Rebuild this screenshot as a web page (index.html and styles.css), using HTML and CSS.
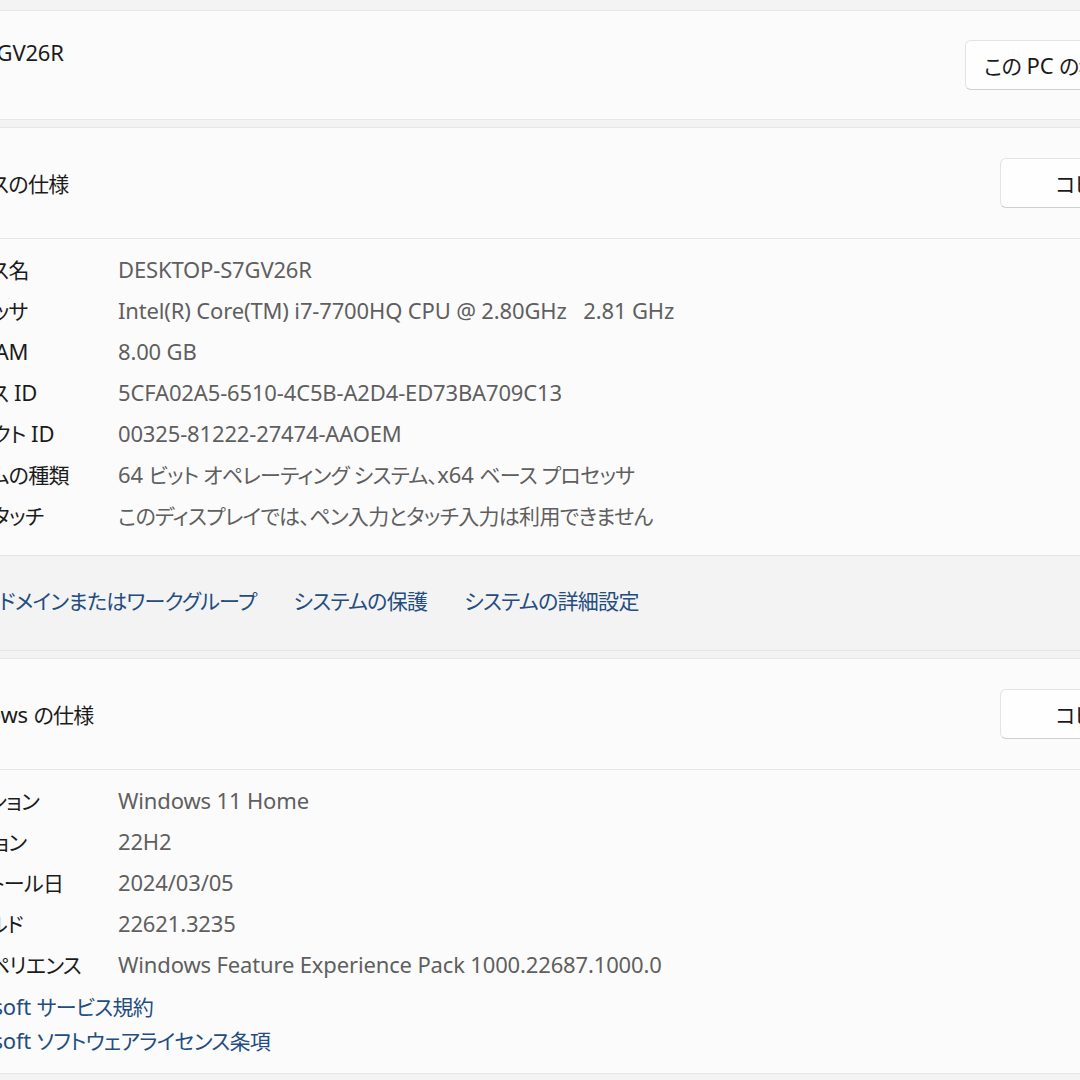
FILE: index.html
```html
<!DOCTYPE html>
<html lang="ja">
<head>
<meta charset="utf-8">
<title>バージョン情報</title>
<link rel="stylesheet" href="styles.css">
</head>
<body>
<div class="page">
  <section class="card card-top">
    <div class="device-name">DESKTOP-S7GV26R</div>
    <button class="btn btn-rename"><span class="ja">この</span> PC <span class="ja">の名前を変更</span></button>
  </section>

  <section class="card">
    <div class="card-header">
      <div class="title"><span class="ja">デバイスの仕様</span></div>
      <button class="btn btn-copy"><span class="ja">コピー</span></button>
    </div>
    <div class="details">
      <div class="row"><span class="label"><span class="ja">デバイス名</span></span><span class="value">DESKTOP-S7GV26R</span></div>
      <div class="row"><span class="label"><span class="ja">プロセッサ</span></span><span class="value">Intel(R) Core(TM) i7-7700HQ CPU @ 2.80GHz&nbsp;&nbsp;&nbsp;2.81 GHz</span></div>
      <div class="row"><span class="label"><span class="ja">実装</span> RAM</span><span class="value">8.00 GB</span></div>
      <div class="row"><span class="label"><span class="ja">デバイス</span> ID</span><span class="value">5CFA02A5-6510-4C5B-A2D4-ED73BA709C13</span></div>
      <div class="row"><span class="label"><span class="ja">プロダクト</span> ID</span><span class="value">00325-81222-27474-AAOEM</span></div>
      <div class="row"><span class="label"><span class="ja">システムの種類</span></span><span class="value">64 <span class="ja">ビット オペレーティング システム、</span>x64 <span class="ja">ベース プロセッサ</span></span></div>
      <div class="row"><span class="label"><span class="ja">ペンとタッチ</span></span><span class="value"><span class="ja">このディスプレイでは、ペン入力とタッチ入力は利用できません</span></span></div>
    </div>
    <div class="related">
      <a class="link" href="#"><span class="ja">ドメインまたはワークグループ</span></a>
      <a class="link" href="#"><span class="ja">システムの保護</span></a>
      <a class="link" href="#"><span class="ja">システムの詳細設定</span></a>
    </div>
  </section>

  <section class="card card-last">
    <div class="card-header">
      <div class="title">Windows <span class="ja">の仕様</span></div>
      <button class="btn btn-copy"><span class="ja">コピー</span></button>
    </div>
    <div class="details details-win">
      <div class="row"><span class="label"><span class="ja">エディション</span></span><span class="value">Windows 11 Home</span></div>
      <div class="row"><span class="label"><span class="ja">バージョン</span></span><span class="value">22H2</span></div>
      <div class="row"><span class="label"><span class="ja">インストール日</span></span><span class="value">2024/03/05</span></div>
      <div class="row"><span class="label">OS <span class="ja">ビルド</span></span><span class="value">22621.3235</span></div>
      <div class="row"><span class="label"><span class="ja">エクスペリエンス</span></span><span class="value">Windows Feature Experience Pack 1000.22687.1000.0</span></div>
      <div class="links">
        <a class="link" href="#">Microsoft <span class="ja">サービス規約</span></a>
        <a class="link" href="#">Microsoft <span class="ja">ソフトウェアライセンス条項</span></a>
      </div>
    </div>
  </section>
</div>
</body>
</html>
```

FILE: styles.css
```css
html, body {
  margin: 0;
  padding: 0;
}

body {
  width: 1080px;
  height: 1080px;
  overflow: hidden;
  background: #f3f3f3;
  font-family: "Noto Sans", "Noto Sans CJK JP", sans-serif;
  font-feature-settings: "palt";
  font-size: 22px;
  letter-spacing: -0.15px;
  color: #1b1b1b;
}

.ja {
  font-size: 21px;
  letter-spacing: -0.7px;
  line-height: 1;
}

.page {
  margin-left: -66px;
  width: 1256px;
  padding-top: 10px;
  display: flex;
  flex-direction: column;
  gap: 7px;
}

.card {
  background: #fbfbfb;
  border: 1px solid #e6e6e6;
  border-radius: 6px;
}

.card-top {
  height: 108px;
  display: flex;
  align-items: center;
  justify-content: space-between;
  padding-right: 20px;
}

.device-name {
  align-self: flex-start;
  margin-top: 26px;
  margin-left: -65px;
  line-height: 30px;
  color: #1b1b1b;
}

.btn {
  font: inherit;
  font-feature-settings: "palt";
  letter-spacing: inherit;
  height: 50px;
  background: #fefefe;
  border: 1px solid #e3e3e3;
  border-bottom-color: #cfcfcf;
  border-radius: 6px;
  color: #1b1b1b;
  white-space: nowrap;
  overflow: hidden;
  padding: 0;
  flex: none;
}

.btn-rename {
  width: 204px;
  text-align: left;
  padding-left: 18px;
}

.btn-copy {
  width: 169px;
  text-align: center;
}

.card-header {
  height: 110px;
  display: flex;
  align-items: center;
  justify-content: space-between;
  padding-right: 20px;
  border-bottom: 1px solid #e6e6e6;
}

.title {
  line-height: 30px;
}

.details {
  padding: 10px 0 19px;
}

.row {
  display: flex;
  align-items: baseline;
  height: 41px;
  line-height: 41px;
  white-space: nowrap;
}

.label {
  width: 183px;
  flex: none;
  color: #1b1b1b;
}

.value {
  color: #5f5f5f;
}

.related {
  height: 88px;
  padding-bottom: 6px;
  background: #f3f3f3;
  border-top: 1px solid #e3e3e3;
  display: flex;
  align-items: center;
  gap: 37px;
  padding-left: 64px;
  border-radius: 0 0 6px 6px;
}

.link {
  color: #234d80;
  text-decoration: none;
  white-space: nowrap;
}

.details-win {
  padding-bottom: 16px;
}

.links {
  display: flex;
  flex-direction: column;
  margin-top: 4px;
  line-height: 34px;
}
```
